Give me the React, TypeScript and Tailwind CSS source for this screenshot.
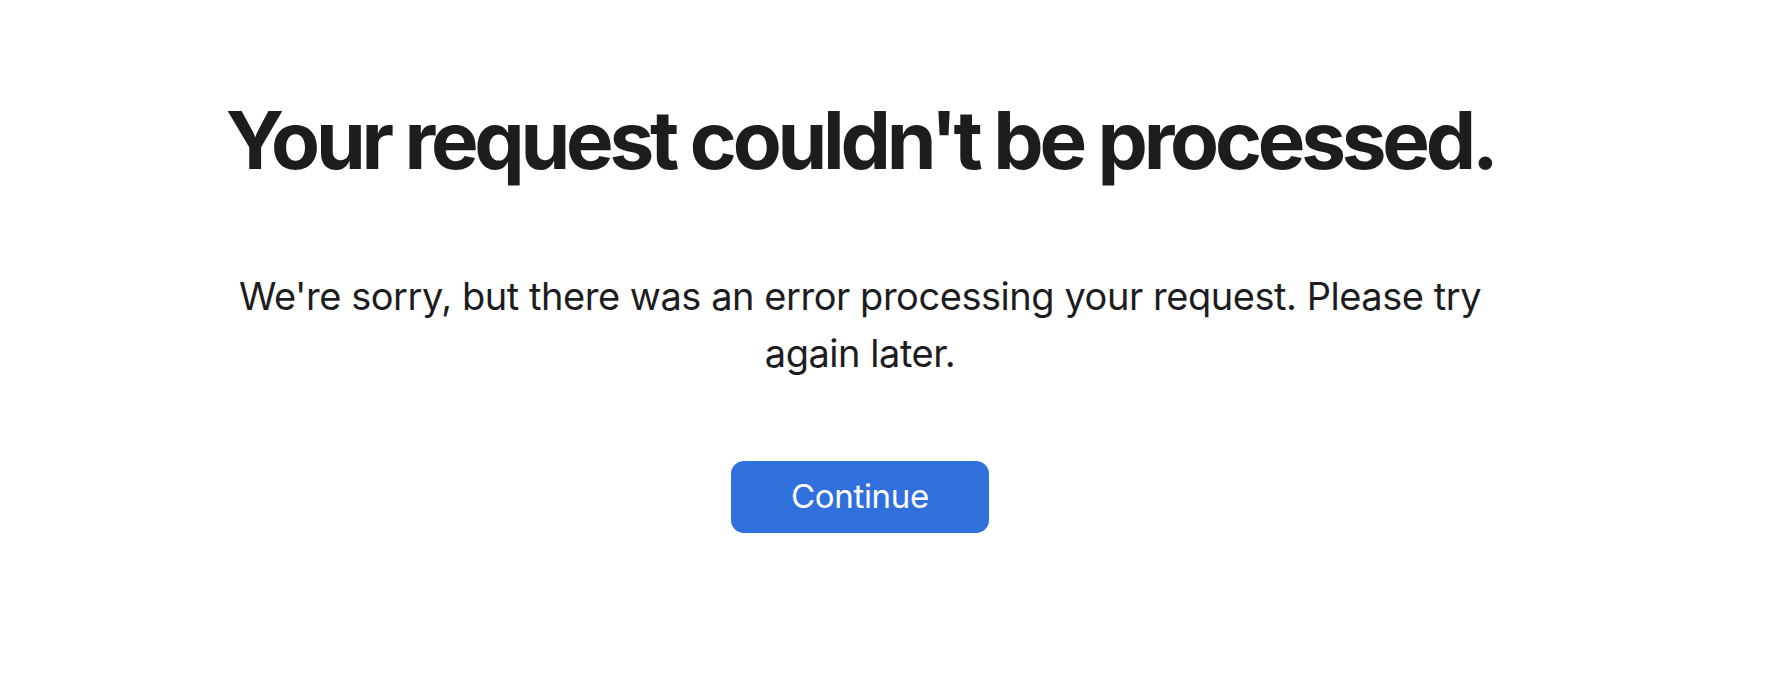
export default function App() {
  return (
    <div className="min-h-screen w-full bg-white text-[#1d1d1f] font-['Inter','Liberation_Sans',sans-serif]">
      <div className="flex flex-col items-center pr-[50px] pt-[96px] text-center">
        <h1 className="text-[80px] font-bold leading-[1.1] tracking-[-0.053em]">
          Your request couldn't be processed.
        </h1>
        <p className="mt-[84px] max-w-[1300px] text-[38px] leading-[57px] tracking-[-0.012em]">
          We're sorry, but there was an error processing your request. Please try again later.
        </p>
        <button className="mt-[79px] h-[72px] w-[258px] rounded-[13px] bg-[#3070dc] text-[33px] tracking-[-0.01em] text-white">
          Continue
        </button>
      </div>
    </div>
  );
}
